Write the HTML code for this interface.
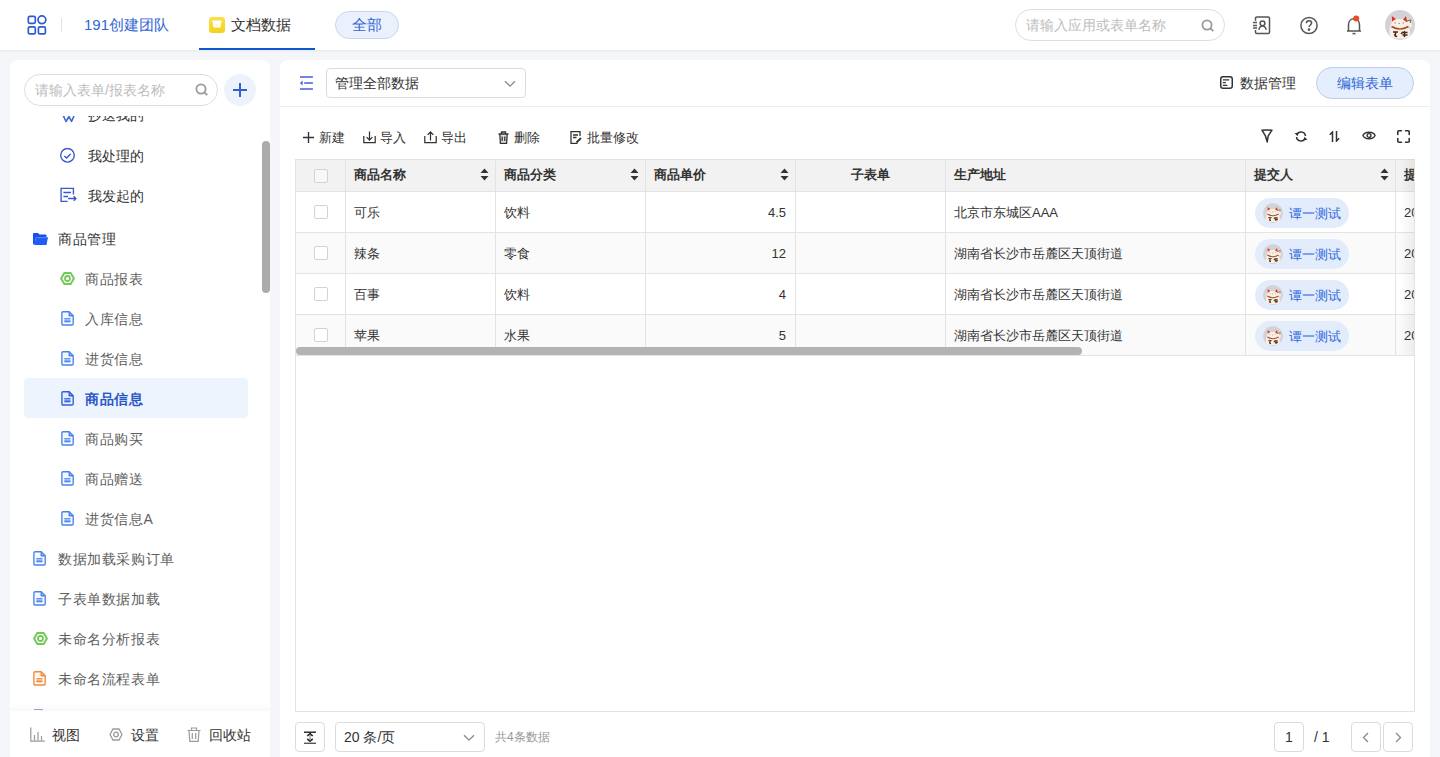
<!DOCTYPE html>
<html><head><meta charset="utf-8">
<style>
*{box-sizing:border-box;margin:0;padding:0}
html,body{width:1440px;height:757px;overflow:hidden}
body{position:relative;background:#f5f6fa;font-family:"Liberation Sans",sans-serif;color:#333;font-size:14px}
.a{position:absolute}
.t{position:absolute;white-space:nowrap;line-height:20px}
svg{display:block}
#hdr{left:0;top:0;width:1440px;height:50px;background:#fff;box-shadow:0 1px 3px rgba(0,0,0,.06)}
#side{left:10px;top:60px;width:260px;height:697px;background:#fff;border-radius:8px 8px 0 0;overflow:hidden}
#main{left:280px;top:60px;width:1150px;height:697px;background:#fff;border-radius:8px 8px 0 0;overflow:hidden}
.it{position:absolute;white-space:nowrap;line-height:20px;font-size:14px}
.fn{font-size:14px;color:#5e5e5e;letter-spacing:.6px}
.tb{position:absolute;white-space:nowrap;line-height:20px;font-size:13px;color:#333}
.th{position:absolute;top:0;height:32px;border-right:1px solid #e3e3e3;font-weight:bold;font-size:13px;line-height:32px;padding-left:9px;color:#333}
.cell{position:absolute;height:41px;border-right:1px solid #e3e3e3;border-bottom:1px solid #e3e3e3;font-size:13px;line-height:40px;padding-left:9px;color:#333}
.cb{position:absolute;width:14px;height:14px;border:1px solid #d3d3d3;border-radius:2px;background:#fff}
.sort{position:absolute;width:9px;height:13px}
.tag{position:absolute;left:10px;top:7px;width:94px;height:30px;border-radius:15px;background:#e3ecfb}
.tag i{position:absolute;left:8px;top:5px;width:20px;height:20px}
.tag span{position:absolute;left:34px;top:1px;line-height:30px;font-size:13px;color:#2f6ae0}
.btn{position:absolute;border:1px solid #dcdcdc;border-radius:4px;background:#fff}
</style></head><body>

<!-- HEADER -->
<div id="hdr" class="a">
  <svg class="a" style="left:26px;top:14px" width="22" height="22" viewBox="0 0 22 22" fill="none" stroke="#2f5bd0" stroke-width="1.7"><rect x="2.3" y="2.3" width="7" height="7" rx="1.5"/><circle cx="15.9" cy="5.8" r="3.9"/><rect x="2.3" y="12.9" width="7" height="7" rx="1.5"/><rect x="12.4" y="12.9" width="7" height="7" rx="1.5"/></svg>
  <div class="a" style="left:61px;top:18px;width:1px;height:14px;background:#e2e2e2"></div>
  <div class="t" style="left:84px;top:15px;font-size:15px;color:#2f66d6">191创建团队</div>
  <svg class="a" style="left:209px;top:17px" width="16" height="16" viewBox="0 0 16 16"><defs><linearGradient id="yg" x1="0" y1="0" x2="0" y2="1"><stop offset="0" stop-color="#f9e045"/><stop offset="1" stop-color="#f3d21c"/></linearGradient></defs><rect width="16" height="16" rx="3.2" fill="url(#yg)"/><path d="M3.2 3.6 H12.6 L11.4 10.6 H4.6 Z" fill="#fff"/><path d="M6.5 8.2 h2" stroke="#f5dc60" stroke-width=".8"/></svg>
  <div class="t" style="left:231px;top:15px;font-size:15px;color:#333">文档数据</div>
  <div class="a" style="left:199px;top:48px;width:116px;height:2px;background:#0e56d2"></div>
  <div class="a" style="left:335px;top:11px;width:64px;height:28px;border-radius:14px;background:#eaf1fc;border:1px solid #c7d6ef"></div>
  <div class="t" style="left:352px;top:15px;font-size:15px;color:#2f66d6">全部</div>

  <div class="a" style="left:1015px;top:9px;width:210px;height:32px;border-radius:16px;border:1px solid #dedede;background:#fff"></div>
  <div class="t" style="left:1026px;top:15px;font-size:14px;color:#bdbdbd">请输入应用或表单名称</div>
  <svg class="a" style="left:1201px;top:19px" width="14" height="13" viewBox="0 0 14 13" fill="none" stroke="#9a9a9a" stroke-width="1.8"><circle cx="6" cy="6" r="4.6"/><path d="M9.3 9.3 L12.3 12"/></svg>

  <svg class="a" style="left:1252px;top:16px" width="20" height="19" viewBox="0 0 20 19" fill="none" stroke="#555" stroke-width="1.5"><path d="M3.5 4.8 V2.3 a1.3 1.3 0 0 1 1.3-1.3 H16.2 a1.3 1.3 0 0 1 1.3 1.3 V16.2 a1.3 1.3 0 0 1-1.3 1.3 H4.8 a1.3 1.3 0 0 1-1.3-1.3 V14"/><path d="M1 6.5h4M1 9.4h4M1 12h4"/><circle cx="10.5" cy="7.3" r="2.4"/><path d="M6.8 13.8 C7.5 11 9 10 10.5 10 S13.5 11 14.2 13.8"/></svg>
  <svg class="a" style="left:1299px;top:16px" width="20" height="19" viewBox="0 0 20 19" fill="none" stroke="#555" stroke-width="1.5"><circle cx="10" cy="9.5" r="8.1"/><path d="M7.4 7.3 c0-1.6 1.2-2.6 2.6-2.6 s2.6 1 2.6 2.4 c0 1.8-2.5 2-2.5 3.9" /><circle cx="10" cy="13.6" r="0.6" fill="#555"/></svg>
  <svg class="a" style="left:1345px;top:15px" width="18" height="20" viewBox="0 0 18 20" fill="none" stroke="#555" stroke-width="1.5"><path d="M2 16 h14 M3.5 16 V10 c0-3.5 2.3-6.2 5.5-6.2 s5.5 2.7 5.5 6.2 V16"/><path d="M7.5 18.6 h3"/><circle cx="11.2" cy="3.5" r="3" fill="#ee4a2a" stroke="none"/></svg>
  <div class="a" style="left:1385px;top:10px"><svg width="30" height="30" viewBox="0 0 30 30"><circle cx="15" cy="15" r="15" fill="#d3d2d6"/><path d="M5 27 C4 20 5 16 6.5 13.5 L6.8 6 L11 9 H17.5 L21 6 L22 12 L26 10 L27 17 L24 17.5 C25.5 21 25.5 24 24.5 27.5 Q15 30 5 27 Z" fill="#f8f0e4"/><path d="M6.8 6 L11 9 L7 11.5 Z" fill="#d8342a"/><path d="M21 6 L22.2 12.5 L18 9.5 Z" fill="#c43a26"/><path d="M22 11 L26 10 L25.2 13" stroke="#8a5a3a" stroke-width="1" fill="none"/><path d="M6.5 16.5 Q15 21.5 23.5 16.5" stroke="#a84a2c" stroke-width="1.6" fill="none"/><circle cx="15" cy="19.3" r="1" fill="#c89030"/><path d="M9.5 13 h1.4 M13.5 13.5 h1.4 M17.5 13 h1.4" stroke="#c07a6a" stroke-width="1"/><path d="M8 22 h5 M9 24.5 l3 2.2 M10.5 21.5 v5.5 M16.5 22.5 h6 M17.5 25 h5 M19.5 21 v6 M16 24 l2-2" stroke="#4a2414" stroke-width="1.4"/></svg></div>
</div>

<!-- SIDEBAR -->
<div id="side" class="a">
  <div class="a" style="left:14px;top:14px;width:194px;height:32px;border-radius:16px;border:1px solid #dedede"></div>
  <div class="t" style="left:25px;top:20px;font-size:14px;color:#bdbdbd">请输入表单/报表名称</div>
  <svg class="a" style="left:185px;top:23px" width="14" height="13" viewBox="0 0 14 13" fill="none" stroke="#9a9a9a" stroke-width="1.8"><circle cx="6" cy="6" r="4.6"/><path d="M9.3 9.3 L12.3 12"/></svg>
  <div class="a" style="left:214px;top:14px;width:32px;height:32px;border-radius:50%;background:#edf2fc"></div>
  <svg class="a" style="left:223px;top:23px" width="14" height="14" viewBox="0 0 14 14" stroke="#2b62d5" stroke-width="2"><path d="M7 0v14M0 7h14"/></svg>

  <div id="list" class="a" style="left:0;top:56px;width:260px;height:598px;overflow:hidden">
<div class="a" style="left:14px;top:262px;width:224px;height:40px;border-radius:4px;background:#eef4fe"></div>
<div class="a" style="left:52px;top:-4.0px"><svg width="13" height="12" viewBox="0 0 13 12" fill="none" stroke="#3d6ad6" stroke-width="1.6" stroke-linejoin="round"><path d="M1 3 L4 9.5 L7 4.5 L9.5 9.5 L12 4"/></svg></div>
<div class="it fn" style="left:78px;top:-11.0px;color:#333;font-size:14px;letter-spacing:0">抄送我的</div>
<div class="a" style="left:50px;top:32.0px"><svg width="16" height="16" viewBox="0 0 16 16" fill="none" stroke="#3a58cc" stroke-width="1.4"><circle cx="7.5" cy="7.3" r="6.8"/><path d="M4.3 7.9 L6.6 10 L10.6 5.9"/></svg></div>
<div class="it fn" style="left:78px;top:30.0px;color:#333;font-size:14px;letter-spacing:0">我处理的</div>
<div class="a" style="left:50px;top:71px"><svg width="17" height="16" viewBox="0 0 17 16" fill="none" stroke="#3a58cc" stroke-width="1.35"><path d="M13.4 7.4 V1.4 H1.1 V14.4 H7.6"/><path d="M3.4 5.5 H11M3.4 9.5 H8"/><path d="M8 11.5 H15.8M13.7 9.3 L15.9 11.5 L13.7 13.7"/></svg></div>
<div class="it fn" style="left:78px;top:69.5px;color:#333;font-size:14px;letter-spacing:0">我发起的</div>
<div class="a" style="left:23px;top:117.0px"><svg width="15" height="12" viewBox="0 0 15 12"><path d="M0 1 a1 1 0 0 1 1-1 H5 L6.5 1.5 H12.5 a1 1 0 0 1 1 1 V4 H3 L1.5 11.5 H0.8 a.8 .8 0 0 1-.8-.8 Z" fill="#1550ec"/><path d="M3 4.2 H15 L13.5 12 H1.2 Z" fill="#1e5ef5"/></svg></div>
<div class="it fn" style="left:48px;top:113.0px;color:#333">商品管理</div>
<div class="a" style="left:50px;top:155.5px"><svg width="15" height="13" viewBox="0 0 15 13" fill="none" stroke="#72c95a" stroke-width="2" stroke-linejoin="round"><path d="M1.1 6.5 L4.3 1.1 H10.7 L13.9 6.5 L10.7 11.9 H4.3 Z"/><circle cx="7.5" cy="6.5" r="2.5" stroke-width="1.8"/></svg></div>
<div class="it fn" style="left:75px;top:153.0px;">商品报表</div>
<div class="a" style="left:51px;top:194.5px"><svg width="13" height="15" viewBox="0 0 13 15" fill="none" stroke="#4a85e6" stroke-width="1.35" stroke-linejoin="round"><path d="M0.9 1.8 a1.1 1.1 0 0 1 1.1-1.1 H8.2 L12.2 4.7 V12.9 a1.1 1.1 0 0 1-1.1 1.1 H2 a1.1 1.1 0 0 1-1.1-1.1 Z" fill="#4a85e6" fill-opacity=".06"/><path d="M8.2 0.8 V4.7 H12.1" fill="#4a85e6" fill-opacity=".35"/><path d="M3.3 7.8h6.2" /><path d="M3.3 10.3h6.2" stroke-width="1.9"/></svg></div>
<div class="it fn" style="left:75px;top:193.0px;">入库信息</div>
<div class="a" style="left:51px;top:234.5px"><svg width="13" height="15" viewBox="0 0 13 15" fill="none" stroke="#4a85e6" stroke-width="1.35" stroke-linejoin="round"><path d="M0.9 1.8 a1.1 1.1 0 0 1 1.1-1.1 H8.2 L12.2 4.7 V12.9 a1.1 1.1 0 0 1-1.1 1.1 H2 a1.1 1.1 0 0 1-1.1-1.1 Z" fill="#4a85e6" fill-opacity=".06"/><path d="M8.2 0.8 V4.7 H12.1" fill="#4a85e6" fill-opacity=".35"/><path d="M3.3 7.8h6.2" /><path d="M3.3 10.3h6.2" stroke-width="1.9"/></svg></div>
<div class="it fn" style="left:75px;top:233.0px;">进货信息</div>
<div class="a" style="left:51px;top:274.5px"><svg width="13" height="15" viewBox="0 0 13 15" fill="none" stroke="#2f62d4" stroke-width="1.35" stroke-linejoin="round"><path d="M0.9 1.8 a1.1 1.1 0 0 1 1.1-1.1 H8.2 L12.2 4.7 V12.9 a1.1 1.1 0 0 1-1.1 1.1 H2 a1.1 1.1 0 0 1-1.1-1.1 Z" fill="#2f62d4" fill-opacity=".06"/><path d="M8.2 0.8 V4.7 H12.1" fill="#2f62d4" fill-opacity=".35"/><path d="M3.3 7.8h6.2" /><path d="M3.3 10.3h6.2" stroke-width="1.9"/></svg></div>
<div class="it fn" style="left:75px;top:273.0px;color:#2858c8;font-weight:bold">商品信息</div>
<div class="a" style="left:51px;top:314.5px"><svg width="13" height="15" viewBox="0 0 13 15" fill="none" stroke="#4a85e6" stroke-width="1.35" stroke-linejoin="round"><path d="M0.9 1.8 a1.1 1.1 0 0 1 1.1-1.1 H8.2 L12.2 4.7 V12.9 a1.1 1.1 0 0 1-1.1 1.1 H2 a1.1 1.1 0 0 1-1.1-1.1 Z" fill="#4a85e6" fill-opacity=".06"/><path d="M8.2 0.8 V4.7 H12.1" fill="#4a85e6" fill-opacity=".35"/><path d="M3.3 7.8h6.2" /><path d="M3.3 10.3h6.2" stroke-width="1.9"/></svg></div>
<div class="it fn" style="left:75px;top:313.0px;">商品购买</div>
<div class="a" style="left:51px;top:354.5px"><svg width="13" height="15" viewBox="0 0 13 15" fill="none" stroke="#4a85e6" stroke-width="1.35" stroke-linejoin="round"><path d="M0.9 1.8 a1.1 1.1 0 0 1 1.1-1.1 H8.2 L12.2 4.7 V12.9 a1.1 1.1 0 0 1-1.1 1.1 H2 a1.1 1.1 0 0 1-1.1-1.1 Z" fill="#4a85e6" fill-opacity=".06"/><path d="M8.2 0.8 V4.7 H12.1" fill="#4a85e6" fill-opacity=".35"/><path d="M3.3 7.8h6.2" /><path d="M3.3 10.3h6.2" stroke-width="1.9"/></svg></div>
<div class="it fn" style="left:75px;top:353.0px;">商品赠送</div>
<div class="a" style="left:51px;top:394.5px"><svg width="13" height="15" viewBox="0 0 13 15" fill="none" stroke="#4a85e6" stroke-width="1.35" stroke-linejoin="round"><path d="M0.9 1.8 a1.1 1.1 0 0 1 1.1-1.1 H8.2 L12.2 4.7 V12.9 a1.1 1.1 0 0 1-1.1 1.1 H2 a1.1 1.1 0 0 1-1.1-1.1 Z" fill="#4a85e6" fill-opacity=".06"/><path d="M8.2 0.8 V4.7 H12.1" fill="#4a85e6" fill-opacity=".35"/><path d="M3.3 7.8h6.2" /><path d="M3.3 10.3h6.2" stroke-width="1.9"/></svg></div>
<div class="it fn" style="left:75px;top:393.0px;">进货信息A</div>
<div class="a" style="left:23px;top:434.5px"><svg width="13" height="15" viewBox="0 0 13 15" fill="none" stroke="#4a85e6" stroke-width="1.35" stroke-linejoin="round"><path d="M0.9 1.8 a1.1 1.1 0 0 1 1.1-1.1 H8.2 L12.2 4.7 V12.9 a1.1 1.1 0 0 1-1.1 1.1 H2 a1.1 1.1 0 0 1-1.1-1.1 Z" fill="#4a85e6" fill-opacity=".06"/><path d="M8.2 0.8 V4.7 H12.1" fill="#4a85e6" fill-opacity=".35"/><path d="M3.3 7.8h6.2" /><path d="M3.3 10.3h6.2" stroke-width="1.9"/></svg></div>
<div class="it fn" style="left:48px;top:433.0px;">数据加载采购订单</div>
<div class="a" style="left:23px;top:474.5px"><svg width="13" height="15" viewBox="0 0 13 15" fill="none" stroke="#4a85e6" stroke-width="1.35" stroke-linejoin="round"><path d="M0.9 1.8 a1.1 1.1 0 0 1 1.1-1.1 H8.2 L12.2 4.7 V12.9 a1.1 1.1 0 0 1-1.1 1.1 H2 a1.1 1.1 0 0 1-1.1-1.1 Z" fill="#4a85e6" fill-opacity=".06"/><path d="M8.2 0.8 V4.7 H12.1" fill="#4a85e6" fill-opacity=".35"/><path d="M3.3 7.8h6.2" /><path d="M3.3 10.3h6.2" stroke-width="1.9"/></svg></div>
<div class="it fn" style="left:48px;top:473.0px;">子表单数据加载</div>
<div class="a" style="left:23px;top:515.5px"><svg width="15" height="13" viewBox="0 0 15 13" fill="none" stroke="#72c95a" stroke-width="2" stroke-linejoin="round"><path d="M1.1 6.5 L4.3 1.1 H10.7 L13.9 6.5 L10.7 11.9 H4.3 Z"/><circle cx="7.5" cy="6.5" r="2.5" stroke-width="1.8"/></svg></div>
<div class="it fn" style="left:48px;top:513.0px;">未命名分析报表</div>
<div class="a" style="left:23px;top:554.5px"><svg width="13" height="15" viewBox="0 0 13 15" fill="none" stroke="#f08a3c" stroke-width="1.35" stroke-linejoin="round"><path d="M0.9 1.8 a1.1 1.1 0 0 1 1.1-1.1 H8.2 L12.2 4.7 V12.9 a1.1 1.1 0 0 1-1.1 1.1 H2 a1.1 1.1 0 0 1-1.1-1.1 Z" fill="#f08a3c" fill-opacity=".06"/><path d="M8.2 0.8 V4.7 H12.1" fill="#f08a3c" fill-opacity=".35"/><path d="M3.3 7.8h6.2" /><path d="M3.3 10.3h6.2" stroke-width="1.9"/></svg></div>
<div class="it fn" style="left:48px;top:553.0px;">未命名流程表单</div>
<div class="a" style="left:23px;top:594.5px"><svg width="13" height="15" viewBox="0 0 13 15" fill="none" stroke="#4a85e6" stroke-width="1.35" stroke-linejoin="round"><path d="M0.9 1.8 a1.1 1.1 0 0 1 1.1-1.1 H8.2 L12.2 4.7 V12.9 a1.1 1.1 0 0 1-1.1 1.1 H2 a1.1 1.1 0 0 1-1.1-1.1 Z" fill="#4a85e6" fill-opacity=".06"/><path d="M8.2 0.8 V4.7 H12.1" fill="#4a85e6" fill-opacity=".35"/><path d="M3.3 7.8h6.2" /><path d="M3.3 10.3h6.2" stroke-width="1.9"/></svg></div>
<div class="it fn" style="left:48px;top:593.0px;">未命名表单</div>
  </div>
  <div class="a" style="left:252px;top:81px;width:8px;height:152px;border-radius:4px;background:#ababab"></div>

  <div class="a" style="left:24px;top:649px;width:9px;height:1px;background:#7d8fd0;opacity:.8"></div>
  <div class="a" style="left:0;top:651px;width:260px;height:46px;background:#fff;box-shadow:0 -3px 6px rgba(40,40,90,.045)">
    <svg class="a" style="left:20px;top:16px" width="15" height="15" viewBox="0 0 15 15" fill="none" stroke="#9a9a9a" stroke-width="1.2"><path d="M0.8 0.5 V14.2 H14.8"/><path d="M4.5 13.5 V8M8 13.5 V5M11.5 13.5 V9"/></svg>
    <div class="t" style="left:42px;top:14px;font-size:14px;color:#333">视图</div>
    <svg class="a" style="left:99px;top:17px" width="14" height="13" viewBox="0 0 14 13" fill="none" stroke="#9a9a9a" stroke-width="1.3"><path d="M1 6.5 L4 1 H10 L13 6.5 L10 12 H4 Z"/><circle cx="7" cy="6.5" r="2.3"/></svg>
    <div class="t" style="left:121px;top:14px;font-size:14px;color:#333">设置</div>
    <svg class="a" style="left:177px;top:16px" width="14" height="15" viewBox="0 0 14 15" fill="none" stroke="#9a9a9a" stroke-width="1.2"><path d="M0.5 3.5h13M4.5 3.5 V1 H9.5 V3.5"/><path d="M2 3.5 L2.8 14.3 H11.2 L12 3.5"/><path d="M5.3 6v6M8.7 6v6"/></svg>
    <div class="t" style="left:199px;top:14px;font-size:14px;color:#333">回收站</div>
  </div>
</div>

<!-- MAIN -->
<div id="main" class="a">
<svg class="a" style="left:19px;top:16px" width="15" height="15" viewBox="0 0 15 15" fill="none" stroke="#7583e3" stroke-width="2"><path d="M1 1h12.9M5.2 7h8.7M1 13h12.9"/><path d="M3.6 4.6 L0.9 7 L3.6 9.4 Z" fill="#4a5fd6" stroke="none"/></svg>
<div class="btn" style="left:46px;top:8px;width:200px;height:30px"></div>
<div class="t" style="left:55px;top:13px;font-size:14px;color:#333">管理全部数据</div>
<svg class="a" style="left:224px;top:20px" width="12" height="8" viewBox="0 0 12 8" fill="none" stroke="#888" stroke-width="1.3"><path d="M1 1.2 L6 6.2 L11 1.2"/></svg>
<div class="a" style="left:0;top:46px;width:1150px;height:1px;background:#ececec"></div>
<svg class="a" style="left:940px;top:16px" width="13" height="13" viewBox="0 0 13 13" fill="none" stroke="#333" stroke-width="1.5"><rect x="0.75" y="0.75" width="11.5" height="11.5" rx="2.3"/><path d="M2.8 3.9h6.4M2.8 6.6h3M2.8 9.4h4.6" stroke-width="1.4"/></svg>
<div class="t" style="left:960px;top:13px;font-size:14px;color:#333">数据管理</div>
<div class="a" style="left:1036px;top:7px;width:98px;height:32px;border-radius:16px;background:#e5eefc;border:1px solid #bccdee"></div>
<div class="t" style="left:1057px;top:13px;font-size:14px;color:#2f66d6">编辑表单</div>
<svg class="a" style="left:23px;top:72px" width="11" height="11" viewBox="0 0 11 11" stroke="#333" stroke-width="1.4"><path d="M5.5 0v11M0 5.5h11"/></svg>
<div class="tb" style="left:38.5px;top:67.5px">新建</div>
<svg class="a" style="left:83px;top:71px" width="13" height="13" viewBox="0 0 13 13" fill="none" stroke="#333" stroke-width="1.25"><path d="M0.8 5 V11.6 H12.2 V5"/><path d="M6.5 0.5 V9 M3.6 6.1 L6.5 9 L9.4 6.1"/></svg>
<div class="tb" style="left:99.5px;top:67.5px">导入</div>
<svg class="a" style="left:144px;top:71px" width="13" height="13" viewBox="0 0 13 13" fill="none" stroke="#333" stroke-width="1.25"><path d="M0.8 5 V11.6 H12.2 V5"/><path d="M6.5 9.5 V1 M3.6 3.9 L6.5 1 L9.4 3.9"/></svg>
<div class="tb" style="left:161px;top:67.5px">导出</div>
<svg class="a" style="left:218px;top:71px" width="11" height="13" viewBox="0 0 11 13" fill="none" stroke="#333" stroke-width="1.3"><path d="M0.5 3h10M3.5 3 V1 H7.5 V3"/><path d="M1.8 3 L2.4 12.3 H8.6 L9.2 3" fill="#333" fill-opacity=".15"/><path d="M4.2 5.5v4.5M6.8 5.5v4.5"/></svg>
<div class="tb" style="left:234px;top:67.5px">删除</div>
<svg class="a" style="left:290px;top:71px" width="12" height="13" viewBox="0 0 12 13" fill="none" stroke="#333" stroke-width="1.3"><path d="M7.5 12.3 H1 V0.7 H10 V5"/><path d="M3 4h5M3 6.5h3.5"/><path d="M6.5 11.5 L11 7" stroke-width="1.8"/></svg>
<div class="tb" style="left:307px;top:67.5px">批量修改</div>
<svg class="a" style="left:981px;top:69px" width="12" height="14" viewBox="0 0 12 14" fill="none" stroke="#333" stroke-width="1.5" stroke-linejoin="round" stroke-linecap="round"><path d="M1 1.2 Q6 0.6 11 1.2 L7.2 6.8 L6.2 13 L4.4 6.8 Z"/></svg>
<svg class="a" style="left:1014px;top:71px" width="14" height="11" viewBox="0 0 14 11" fill="none" stroke="#333" stroke-width="1.5"><path d="M3.2 3 a4.5 4.3 0 0 1 8.3 2"/><path d="M10.8 8 a4.5 4.3 0 0 1-8.3-2"/><path d="M0.6 2.2 L4.6 1.6 L3.6 5.2 Z M13.4 8.8 L9.4 9.4 L10.4 5.8 Z" fill="#333" stroke="none"/></svg>
<svg class="a" style="left:1049px;top:71px" width="11" height="11" viewBox="0 0 11 11" fill="none" stroke="#333" stroke-width="1.5"><path d="M3.5 11 V1 L0.8 3.7"/><path d="M7.5 0 V10 L10.2 7.3"/></svg>
<svg class="a" style="left:1082px;top:70px" width="14" height="11" viewBox="0 0 14 11" fill="none" stroke="#333" stroke-width="1.4"><path d="M0.9 5.5 C2.8 1.2 11.2 1.2 13.1 5.5 C11.2 9.8 2.8 9.8 0.9 5.5 Z"/><circle cx="7" cy="5.5" r="1.9"/></svg>
<svg class="a" style="left:1117px;top:70px" width="13" height="13" viewBox="0 0 13 13" fill="none" stroke="#333" stroke-width="1.6" stroke-linecap="round" stroke-linejoin="round"><path d="M0.8 4.5 V1.8 a1 1 0 0 1 1-1 H4.5 M8.5 0.8 H11.2 a1 1 0 0 1 1 1 V4.5 M12.2 8.5 V11.2 a1 1 0 0 1-1 1 H8.5 M4.5 12.2 H1.8 a1 1 0 0 1-1-1 V8.5"/></svg>
<div class="a" style="left:15px;top:99px;width:1120px;height:553px;border-bottom:1px solid #e3e3e3;border-right:1px solid #e3e3e3;overflow:hidden"><div class="a" style="left:0;top:0;width:1250px;height:33px;background:#f2f2f2;border-top:1px solid #e3e3e3;border-bottom:1px solid #e3e3e3"></div>
<div class="cb" style="left:19px;top:10px;background:#f7f7f7"></div>
<div class="a" style="left:0px;top:0;width:1px;height:197px;background:#e3e3e3"></div>
<div class="t" style="left:59px;top:6px;font-size:13px;font-weight:bold;color:#333">商品名称</div>
<svg class="a" style="left:185px;top:9px" width="9" height="13" viewBox="0 0 9 13"><path d="M4.5 0.5 L8.5 5 H0.5 Z M4.5 12.5 L8.5 8 H0.5 Z" fill="#333"/></svg>
<div class="a" style="left:50px;top:0;width:1px;height:197px;background:#e3e3e3"></div>
<div class="t" style="left:209px;top:6px;font-size:13px;font-weight:bold;color:#333">商品分类</div>
<svg class="a" style="left:335px;top:9px" width="9" height="13" viewBox="0 0 9 13"><path d="M4.5 0.5 L8.5 5 H0.5 Z M4.5 12.5 L8.5 8 H0.5 Z" fill="#333"/></svg>
<div class="a" style="left:200px;top:0;width:1px;height:197px;background:#e3e3e3"></div>
<div class="t" style="left:359px;top:6px;font-size:13px;font-weight:bold;color:#333">商品单价</div>
<svg class="a" style="left:485px;top:9px" width="9" height="13" viewBox="0 0 9 13"><path d="M4.5 0.5 L8.5 5 H0.5 Z M4.5 12.5 L8.5 8 H0.5 Z" fill="#333"/></svg>
<div class="a" style="left:350px;top:0;width:1px;height:197px;background:#e3e3e3"></div>
<div class="t" style="left:500px;top:6px;width:150px;text-align:center;font-size:13px;font-weight:bold;color:#333">子表单</div>
<div class="a" style="left:500px;top:0;width:1px;height:197px;background:#e3e3e3"></div>
<div class="t" style="left:659px;top:6px;font-size:13px;font-weight:bold;color:#333">生产地址</div>
<div class="a" style="left:650px;top:0;width:1px;height:197px;background:#e3e3e3"></div>
<div class="t" style="left:959px;top:6px;font-size:13px;font-weight:bold;color:#333">提交人</div>
<svg class="a" style="left:1085px;top:9px" width="9" height="13" viewBox="0 0 9 13"><path d="M4.5 0.5 L8.5 5 H0.5 Z M4.5 12.5 L8.5 8 H0.5 Z" fill="#333"/></svg>
<div class="a" style="left:950px;top:0;width:1px;height:197px;background:#e3e3e3"></div>
<div class="t" style="left:1109px;top:6px;font-size:13px;font-weight:bold;color:#333">提交时间</div>
<svg class="a" style="left:1235px;top:9px" width="9" height="13" viewBox="0 0 9 13"><path d="M4.5 0.5 L8.5 5 H0.5 Z M4.5 12.5 L8.5 8 H0.5 Z" fill="#333"/></svg>
<div class="a" style="left:1100px;top:0;width:1px;height:197px;background:#e3e3e3"></div>
<div class="a" style="left:0;top:33px;width:1250px;height:41px;background:#fff;border-bottom:1px solid #e3e3e3"></div>
<div class="cb" style="left:19px;top:46px"></div>
<div class="tb" style="left:59px;top:43.5px">可乐</div>
<div class="tb" style="left:209px;top:43.5px">饮料</div>
<div class="tb" style="left:350px;top:43.5px;width:141px;text-align:right">4.5</div>
<div class="tb" style="left:659px;top:43.5px">北京市东城区AAA</div>
<div class="tag" style="left:960px;top:39px"><i><svg width="20" height="20" viewBox="0 0 30 30"><circle cx="15" cy="15" r="15" fill="#d3d2d6"/><path d="M5 27 C4 20 5 16 6.5 13.5 L6.8 6 L11 9 H17.5 L21 6 L22 12 L26 10 L27 17 L24 17.5 C25.5 21 25.5 24 24.5 27.5 Q15 30 5 27 Z" fill="#f8f0e4"/><path d="M6.8 6 L11 9 L7 11.5 Z" fill="#d8342a"/><path d="M21 6 L22.2 12.5 L18 9.5 Z" fill="#c43a26"/><path d="M22 11 L26 10 L25.2 13" stroke="#8a5a3a" stroke-width="1" fill="none"/><path d="M6.5 16.5 Q15 21.5 23.5 16.5" stroke="#a84a2c" stroke-width="1.6" fill="none"/><circle cx="15" cy="19.3" r="1" fill="#c89030"/><path d="M9.5 13 h1.4 M13.5 13.5 h1.4 M17.5 13 h1.4" stroke="#c07a6a" stroke-width="1"/><path d="M8 22 h5 M9 24.5 l3 2.2 M10.5 21.5 v5.5 M16.5 22.5 h6 M17.5 25 h5 M19.5 21 v6 M16 24 l2-2" stroke="#4a2414" stroke-width="1.4"/></svg></i><span>谭一测试</span></div>
<div class="tb" style="left:1109px;top:43.5px">2023-</div>
<div class="a" style="left:0;top:74px;width:1250px;height:41px;background:#fafafa;border-bottom:1px solid #e3e3e3"></div>
<div class="cb" style="left:19px;top:87px"></div>
<div class="tb" style="left:59px;top:84.5px">辣条</div>
<div class="tb" style="left:209px;top:84.5px">零食</div>
<div class="tb" style="left:350px;top:84.5px;width:141px;text-align:right">12</div>
<div class="tb" style="left:659px;top:84.5px">湖南省长沙市岳麓区天顶街道</div>
<div class="tag" style="left:960px;top:80px"><i><svg width="20" height="20" viewBox="0 0 30 30"><circle cx="15" cy="15" r="15" fill="#d3d2d6"/><path d="M5 27 C4 20 5 16 6.5 13.5 L6.8 6 L11 9 H17.5 L21 6 L22 12 L26 10 L27 17 L24 17.5 C25.5 21 25.5 24 24.5 27.5 Q15 30 5 27 Z" fill="#f8f0e4"/><path d="M6.8 6 L11 9 L7 11.5 Z" fill="#d8342a"/><path d="M21 6 L22.2 12.5 L18 9.5 Z" fill="#c43a26"/><path d="M22 11 L26 10 L25.2 13" stroke="#8a5a3a" stroke-width="1" fill="none"/><path d="M6.5 16.5 Q15 21.5 23.5 16.5" stroke="#a84a2c" stroke-width="1.6" fill="none"/><circle cx="15" cy="19.3" r="1" fill="#c89030"/><path d="M9.5 13 h1.4 M13.5 13.5 h1.4 M17.5 13 h1.4" stroke="#c07a6a" stroke-width="1"/><path d="M8 22 h5 M9 24.5 l3 2.2 M10.5 21.5 v5.5 M16.5 22.5 h6 M17.5 25 h5 M19.5 21 v6 M16 24 l2-2" stroke="#4a2414" stroke-width="1.4"/></svg></i><span>谭一测试</span></div>
<div class="tb" style="left:1109px;top:84.5px">2023-</div>
<div class="a" style="left:0;top:115px;width:1250px;height:41px;background:#fff;border-bottom:1px solid #e3e3e3"></div>
<div class="cb" style="left:19px;top:128px"></div>
<div class="tb" style="left:59px;top:125.5px">百事</div>
<div class="tb" style="left:209px;top:125.5px">饮料</div>
<div class="tb" style="left:350px;top:125.5px;width:141px;text-align:right">4</div>
<div class="tb" style="left:659px;top:125.5px">湖南省长沙市岳麓区天顶街道</div>
<div class="tag" style="left:960px;top:121px"><i><svg width="20" height="20" viewBox="0 0 30 30"><circle cx="15" cy="15" r="15" fill="#d3d2d6"/><path d="M5 27 C4 20 5 16 6.5 13.5 L6.8 6 L11 9 H17.5 L21 6 L22 12 L26 10 L27 17 L24 17.5 C25.5 21 25.5 24 24.5 27.5 Q15 30 5 27 Z" fill="#f8f0e4"/><path d="M6.8 6 L11 9 L7 11.5 Z" fill="#d8342a"/><path d="M21 6 L22.2 12.5 L18 9.5 Z" fill="#c43a26"/><path d="M22 11 L26 10 L25.2 13" stroke="#8a5a3a" stroke-width="1" fill="none"/><path d="M6.5 16.5 Q15 21.5 23.5 16.5" stroke="#a84a2c" stroke-width="1.6" fill="none"/><circle cx="15" cy="19.3" r="1" fill="#c89030"/><path d="M9.5 13 h1.4 M13.5 13.5 h1.4 M17.5 13 h1.4" stroke="#c07a6a" stroke-width="1"/><path d="M8 22 h5 M9 24.5 l3 2.2 M10.5 21.5 v5.5 M16.5 22.5 h6 M17.5 25 h5 M19.5 21 v6 M16 24 l2-2" stroke="#4a2414" stroke-width="1.4"/></svg></i><span>谭一测试</span></div>
<div class="tb" style="left:1109px;top:125.5px">2023-</div>
<div class="a" style="left:0;top:156px;width:1250px;height:41px;background:#fafafa;border-bottom:1px solid #e3e3e3"></div>
<div class="cb" style="left:19px;top:169px"></div>
<div class="tb" style="left:59px;top:166.5px">苹果</div>
<div class="tb" style="left:209px;top:166.5px">水果</div>
<div class="tb" style="left:350px;top:166.5px;width:141px;text-align:right">5</div>
<div class="tb" style="left:659px;top:166.5px">湖南省长沙市岳麓区天顶街道</div>
<div class="tag" style="left:960px;top:162px"><i><svg width="20" height="20" viewBox="0 0 30 30"><circle cx="15" cy="15" r="15" fill="#d3d2d6"/><path d="M5 27 C4 20 5 16 6.5 13.5 L6.8 6 L11 9 H17.5 L21 6 L22 12 L26 10 L27 17 L24 17.5 C25.5 21 25.5 24 24.5 27.5 Q15 30 5 27 Z" fill="#f8f0e4"/><path d="M6.8 6 L11 9 L7 11.5 Z" fill="#d8342a"/><path d="M21 6 L22.2 12.5 L18 9.5 Z" fill="#c43a26"/><path d="M22 11 L26 10 L25.2 13" stroke="#8a5a3a" stroke-width="1" fill="none"/><path d="M6.5 16.5 Q15 21.5 23.5 16.5" stroke="#a84a2c" stroke-width="1.6" fill="none"/><circle cx="15" cy="19.3" r="1" fill="#c89030"/><path d="M9.5 13 h1.4 M13.5 13.5 h1.4 M17.5 13 h1.4" stroke="#c07a6a" stroke-width="1"/><path d="M8 22 h5 M9 24.5 l3 2.2 M10.5 21.5 v5.5 M16.5 22.5 h6 M17.5 25 h5 M19.5 21 v6 M16 24 l2-2" stroke="#4a2414" stroke-width="1.4"/></svg></i><span>谭一测试</span></div>
<div class="tb" style="left:1109px;top:166.5px">2023-</div>
<div class="a" style="left:0px;top:0;width:1px;height:197px;background:#e3e3e3"></div>
<div class="a" style="left:50px;top:0;width:1px;height:197px;background:#e3e3e3"></div>
<div class="a" style="left:200px;top:0;width:1px;height:197px;background:#e3e3e3"></div>
<div class="a" style="left:350px;top:0;width:1px;height:197px;background:#e3e3e3"></div>
<div class="a" style="left:500px;top:0;width:1px;height:197px;background:#e3e3e3"></div>
<div class="a" style="left:650px;top:0;width:1px;height:197px;background:#e3e3e3"></div>
<div class="a" style="left:950px;top:0;width:1px;height:197px;background:#e3e3e3"></div>
<div class="a" style="left:1100px;top:0;width:1px;height:197px;background:#e3e3e3"></div>
<div class="a" style="left:1px;top:188px;width:786px;height:8px;border-radius:4px;background:#b3b3b3"></div>
<div class="a" style="left:1105px;top:0;width:15px;height:196px;background:linear-gradient(to right,rgba(0,0,0,0),rgba(0,0,0,.06))"></div><div class="a" style="left:0;top:0;width:1px;height:553px;background:#e3e3e3"></div></div>
<div class="btn" style="left:15px;top:662px;width:30px;height:30px"></div>
<svg class="a" style="left:24px;top:671px" width="12" height="13" viewBox="0 0 12 13" fill="none" stroke="#222" stroke-width="1.4"><path d="M0 1.2h12"/><path d="M0 12.3h12" stroke="#555"/><path d="M3.3 5 L6 2.6 L8.7 5 M3.3 7.9 L6 10.3 L8.7 7.9" stroke-width="1.6"/><path d="M6 3.5v6" stroke="#777" stroke-width="1"/></svg>
<div class="btn" style="left:55px;top:662px;width:150px;height:30px"></div>
<div class="t" style="left:64px;top:667px;font-size:14px;color:#333">20 条/页</div>
<svg class="a" style="left:183px;top:674px" width="12" height="8" viewBox="0 0 12 8" fill="none" stroke="#888" stroke-width="1.3"><path d="M1 1.2 L6 6.2 L11 1.2"/></svg>
<div class="t" style="left:215px;top:667px;font-size:12px;color:#999">共4条数据</div>
<div class="btn" style="left:994px;top:662px;width:30px;height:30px"></div>
<div class="t" style="left:994px;top:667px;width:30px;text-align:center;font-size:14px;color:#333">1</div>
<div class="t" style="left:1034px;top:667px;font-size:14px;color:#333">/ 1</div>
<div class="btn" style="left:1071px;top:662px;width:30px;height:30px"></div>
<div class="btn" style="left:1103px;top:662px;width:30px;height:30px"></div>
<svg class="a" style="left:1082px;top:672px" width="7" height="11" viewBox="0 0 7 11" fill="none" stroke="#888" stroke-width="1.3"><path d="M6 1 L1.5 5.5 L6 10"/></svg>
<svg class="a" style="left:1115px;top:672px" width="7" height="11" viewBox="0 0 7 11" fill="none" stroke="#888" stroke-width="1.3"><path d="M1 1 L5.5 5.5 L1 10"/></svg>
</div>

</body></html>
